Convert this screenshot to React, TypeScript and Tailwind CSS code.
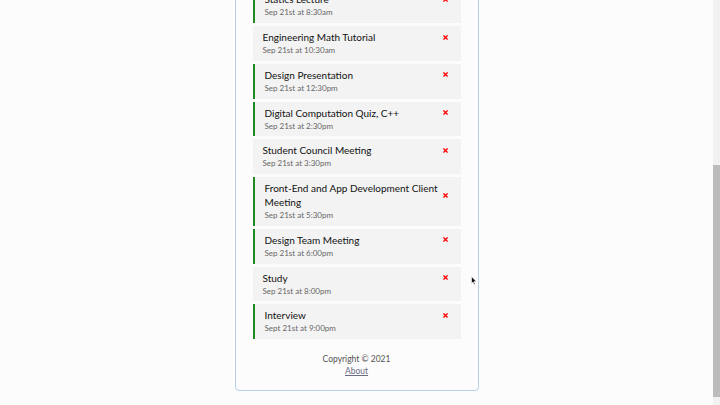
import React from "react";
import { FaTimes } from "react-icons/fa";

type Task = { text: string; day: string; reminder: boolean };

const tasks: Task[] = [
  { text: "Statics Lecture", day: "Sep 21st at 8:30am", reminder: true },
  { text: "Engineering Math Tutorial", day: "Sep 21st at 10:30am", reminder: false },
  { text: "Design Presentation", day: "Sep 21st at 12:30pm", reminder: true },
  { text: "Digital Computation Quiz, C++", day: "Sep 21st at 2:30pm", reminder: true },
  { text: "Student Council Meeting", day: "Sep 21st at 3:30pm", reminder: false },
  { text: "Front-End and App Development Client Meeting", day: "Sep 21st at 5:30pm", reminder: true },
  { text: "Design Team Meeting", day: "Sep 21st at 6:00pm", reminder: true },
  { text: "Study", day: "Sep 21st at 8:00pm", reminder: false },
  { text: "Interview", day: "Sept 21st at 9:00pm", reminder: true },
];

function TaskItem({ task }: { task: Task }) {
  return (
    <div
      className={
        task.reminder
          ? "bg-[#f3f3f3] pl-[10px] pr-[12px] pt-[4px] pb-[4.75px] border-l-2 border-[#1f8a1f]"
          : "bg-[#f3f3f3] pl-[10px] pr-[12px] pt-[4px] pb-[4.75px]"
      }
    >
      <h3 className="flex items-center justify-between gap-[1px] text-[10px] leading-[14px] font-normal text-[#111]">
        <span>{task.text}</span>
        <FaTimes className="text-[#ff0000] w-[7px] h-[7px] shrink-0" />
      </h3>
      <p className="text-[8px] leading-[12px] text-[#666]">{task.day}</p>
    </div>
  );
}

export default function App() {
  return (
    <div
      className="relative flex h-[405px] w-[720px] overflow-hidden bg-[#fcfcfc]"
      style={{ fontFamily: 'Lato, "Open Sans", sans-serif' }}
    >
      <div className="flex flex-1 flex-col items-center justify-end pb-[14px]">
        <div className="w-[244px] rounded-[4px] border border-[#b7cfe6] px-[17px] pb-[13px]">
          <div className="flex flex-col gap-[3px]">
            {tasks.map((t) => (
              <TaskItem key={t.text} task={t} />
            ))}
          </div>
          <footer className="mt-[14px] text-center text-[8.5px] leading-[12px] text-[#555]">
            <p>Copyright &copy; 2021</p>
            <a href="#" className="text-[#6b6b85] underline">
              About
            </a>
          </footer>
        </div>
      </div>
      <div className="flex w-[7px] flex-col bg-[#f1f1f1]">
        <div className="h-[165px]" />
        <div className="h-[232px] bg-[#bcbcbc]" />
      </div>
      <svg
        className="absolute left-[471px] top-[276px]"
        width="6"
        height="9"
        viewBox="0 0 6 9"
      >
        <path d="M0.5 0.5 L0.5 7.5 L2 6 L3.2 8.5 L4.2 8 L3 5.6 L5.3 5.6 Z" fill="#111" stroke="#fff" strokeWidth="0.6" />
      </svg>
    </div>
  );
}
